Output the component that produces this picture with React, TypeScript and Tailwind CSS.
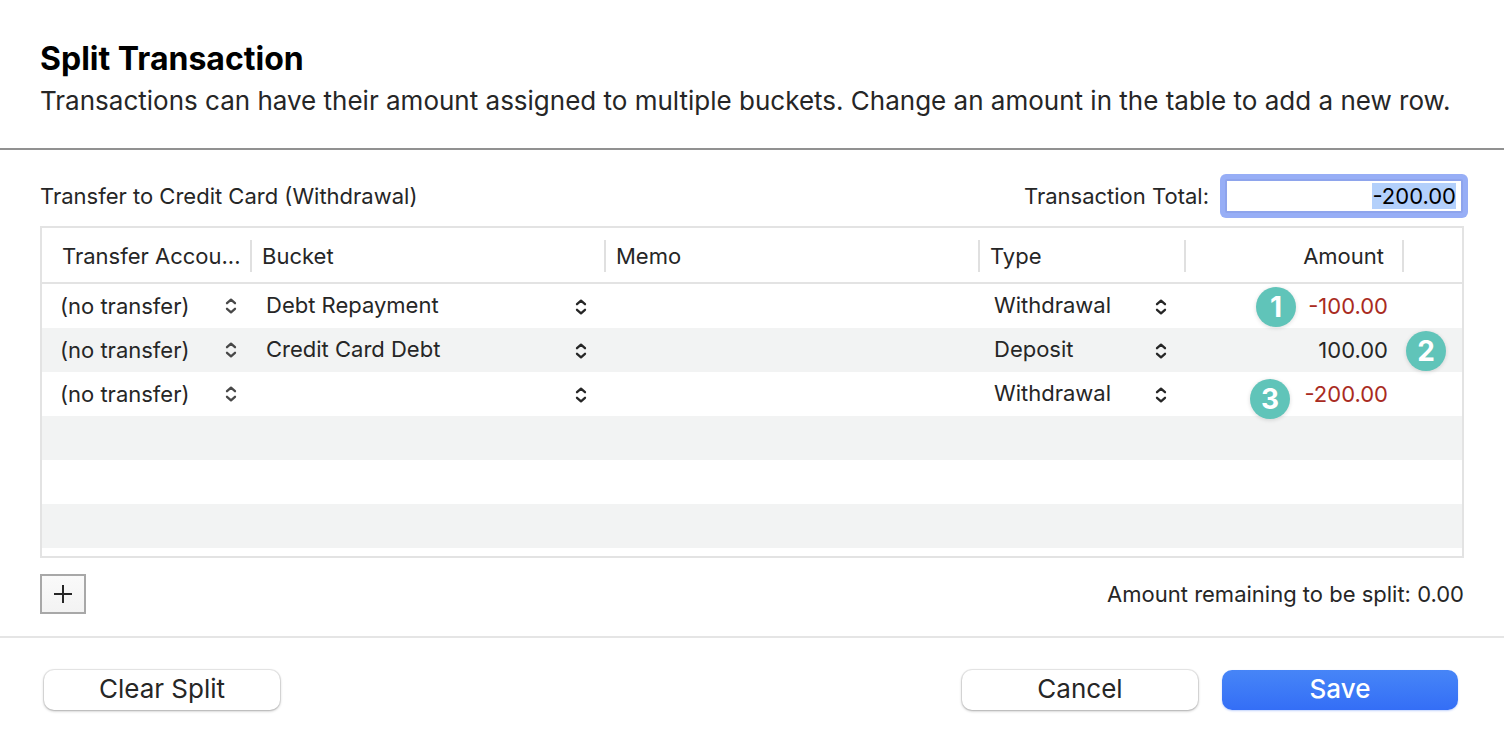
import { useEffect, useRef, useState } from "react";

type Split = {
  bucket: string;
  type: string;
  amount: string;
  badge: string;
  badgeClass: string;
};

const splits: Split[] = [
  { bucket: "Debt Repayment", type: "Withdrawal", amount: "-100.00", badge: "1", badgeClass: "left-[70px] top-[3px]" },
  { bucket: "Credit Card Debt", type: "Deposit", amount: "100.00", badge: "2", badgeClass: "left-[220px] top-[3px]" },
  { bucket: "", type: "Withdrawal", amount: "-200.00", badge: "3", badgeClass: "left-[64px] top-[7px]" },
];

const columns = [
  { title: "Transfer Accou...", className: "pl-5" },
  { title: "Bucket", className: "pl-[10px]" },
  { title: "Memo", className: "pl-[10px]" },
  { title: "Type", className: "pl-[10px]" },
  { title: "Amount", className: "pr-[18px] text-right" },
];

function Chevrons({ className }: { className: string }) {
  return (
    <svg
      viewBox="0 0 12 16"
      className={`pointer-events-none absolute h-4 w-3 ${className}`}
      fill="none"
      stroke="currentColor"
      strokeWidth="2.3"
      strokeLinecap="round"
      strokeLinejoin="round"
      aria-hidden="true"
    >
      <path d="M2 5.2 6 1.6l4 3.6M2 10.8l4 3.6 4-3.6" />
    </svg>
  );
}

function Picker({
  label,
  value,
  options,
  className,
  iconClass,
}: {
  label: string;
  value: string;
  options: string[];
  className: string;
  iconClass: string;
}) {
  return (
    <div className="relative">
      <select
        aria-label={label}
        defaultValue={value}
        className={`block h-11 w-full appearance-none bg-transparent outline-none ${className}`}
      >
        {options.map((o) => (
          <option key={o} value={o}>
            {o}
          </option>
        ))}
      </select>
      <Chevrons className={iconClass} />
    </div>
  );
}

export default function App() {
  const [total, setTotal] = useState("-200.00");
  const totalRef = useRef<HTMLInputElement>(null);

  useEffect(() => {
    totalRef.current?.focus();
    totalRef.current?.select();
  }, []);

  return (
    <main className="bg-white font-['Inter',sans-serif] text-[22px] leading-7 text-[#262626]">
      <header className="border-b-2 border-[#919191] px-10 pt-10 pb-7">
        <h1 className="text-[32px] leading-[38px] font-bold text-black">Split Transaction</h1>
        <p className="pt-1 text-[26px] leading-[38px]">
          Transactions can have their amount assigned to multiple buckets. Change an amount in the table to add a new
          row.
        </p>
      </header>

      <section className="border-b-2 border-[#e5e5e5] px-10 pt-7 pb-[22px]">
        <div className="flex items-center justify-between pb-3">
          <h2>Transfer to Credit Card (Withdrawal)</h2>
          <div className="flex h-9 items-center gap-4 pr-px">
            <label htmlFor="total">Transaction Total:</label>
            <input
              id="total"
              ref={totalRef}
              value={total}
              onChange={(e) => setTotal(e.target.value)}
              className="h-[34px] w-[238px] rounded-[2px] border-2 border-[#8ea4ec] bg-white pr-[5px] text-right text-black ring-[5px] ring-[#97aef6] outline-none selection:bg-[#b3d0fb] selection:text-black"
            />
          </div>
        </div>

        <div className="border-2 border-[#e3e3e3] pb-2">
          <table className="w-full table-fixed border-separate border-spacing-0">
            <colgroup>
              <col className="w-[210px]" />
              <col className="w-[354px]" />
              <col />
              <col className="w-[206px]" />
              <col className="w-[218px]" />
              <col className="w-[58px]" />
            </colgroup>
            <thead>
              <tr>
                {columns.map((c) => (
                  <th
                    key={c.title}
                    scope="col"
                    className="h-14 border-b-2 border-[#e3e3e3] p-0 pt-0.5 text-left font-normal"
                  >
                    <div className={`h-8 border-r-2 border-[#e0e0e0] leading-8 whitespace-nowrap ${c.className}`}>
                      {c.title}
                    </div>
                  </th>
                ))}
                <td className="border-b-2 border-[#e3e3e3]" />
              </tr>
            </thead>
            <tbody>
              {splits.map((s, i) => (
                <tr key={s.badge} className="h-11 even:bg-[#f2f3f3]">
                  <td className="p-0">
                    <Picker
                      label={`Transfer account ${i + 1}`}
                      value="(no transfer)"
                      options={["(no transfer)"]}
                      className="pl-[18px]"
                      iconClass="top-[14px] right-[15px] text-[#484848]"
                    />
                  </td>
                  <td className="p-0">
                    <Picker
                      label={`Bucket ${i + 1}`}
                      value={s.bucket}
                      options={["", "Debt Repayment", "Credit Card Debt"]}
                      className="pb-0.5 pl-[14px]"
                      iconClass="top-[15px] right-[19px]"
                    />
                  </td>
                  <td className="p-0">
                    <input aria-label={`Memo ${i + 1}`} className="block h-11 w-full bg-transparent px-3 outline-none" />
                  </td>
                  <td className="p-0">
                    <Picker
                      label={`Type ${i + 1}`}
                      value={s.type}
                      options={["Withdrawal", "Deposit"]}
                      className="pb-0.5 pl-[14px]"
                      iconClass="top-[15px] right-[19px]"
                    />
                  </td>
                  <td className="relative p-0">
                    <input
                      aria-label={`Amount ${i + 1}`}
                      defaultValue={s.amount}
                      className={`block h-11 w-full bg-transparent pr-4 text-right outline-none ${
                        s.amount.startsWith("-") ? "text-[#a92b22]" : ""
                      }`}
                    />
                    <span
                      className={`absolute z-10 flex size-10 items-center justify-center rounded-full bg-[#60c4b9] text-[28px] font-bold text-white shadow-[0_1px_4px_rgba(0,0,0,0.14)] ${s.badgeClass}`}
                    >
                      {s.badge}
                    </span>
                  </td>
                  <td className="p-0" />
                </tr>
              ))}
              {["a", "b", "c"].map((k) => (
                <tr key={k} className="h-11 even:bg-[#f2f3f3]">
                  <td colSpan={6} className="p-0" />
                </tr>
              ))}
            </tbody>
          </table>
        </div>

        <div className="flex items-center justify-between pt-4">
          <button
            type="button"
            aria-label="Add row"
            className="flex h-10 w-[46px] items-center justify-center border-2 border-[#a8a8a8] bg-linear-to-b from-[#fafafa] to-[#f3f3f3]"
          >
            <svg viewBox="0 0 18 18" className="size-[18px]" stroke="currentColor" strokeWidth="2" aria-hidden="true">
              <path d="M9 0v18M0 9h18" />
            </svg>
          </button>
          <p>Amount remaining to be split: 0.00</p>
        </div>
      </section>

      <footer className="flex gap-6 pt-8 pr-[46px] pb-10 pl-11 text-[26px] leading-9">
        <button
          type="button"
          className="mr-auto h-10 w-[236px] rounded-[10px] bg-white pb-0.5 shadow-[0_0_0_1px_rgba(0,0,0,0.07),0_1px_3px_rgba(0,0,0,0.3)]"
        >
          Clear Split
        </button>
        <button
          type="button"
          className="h-10 w-[236px] rounded-[10px] bg-white pb-0.5 shadow-[0_0_0_1px_rgba(0,0,0,0.07),0_1px_3px_rgba(0,0,0,0.3)]"
        >
          Cancel
        </button>
        <button
          type="button"
          className="h-10 w-[236px] rounded-[10px] bg-linear-to-b from-[#4785f7] to-[#346ef6] pb-0.5 font-medium text-white shadow-[0_1px_2px_rgba(52,110,246,0.3)]"
        >
          Save
        </button>
      </footer>
    </main>
  );
}
